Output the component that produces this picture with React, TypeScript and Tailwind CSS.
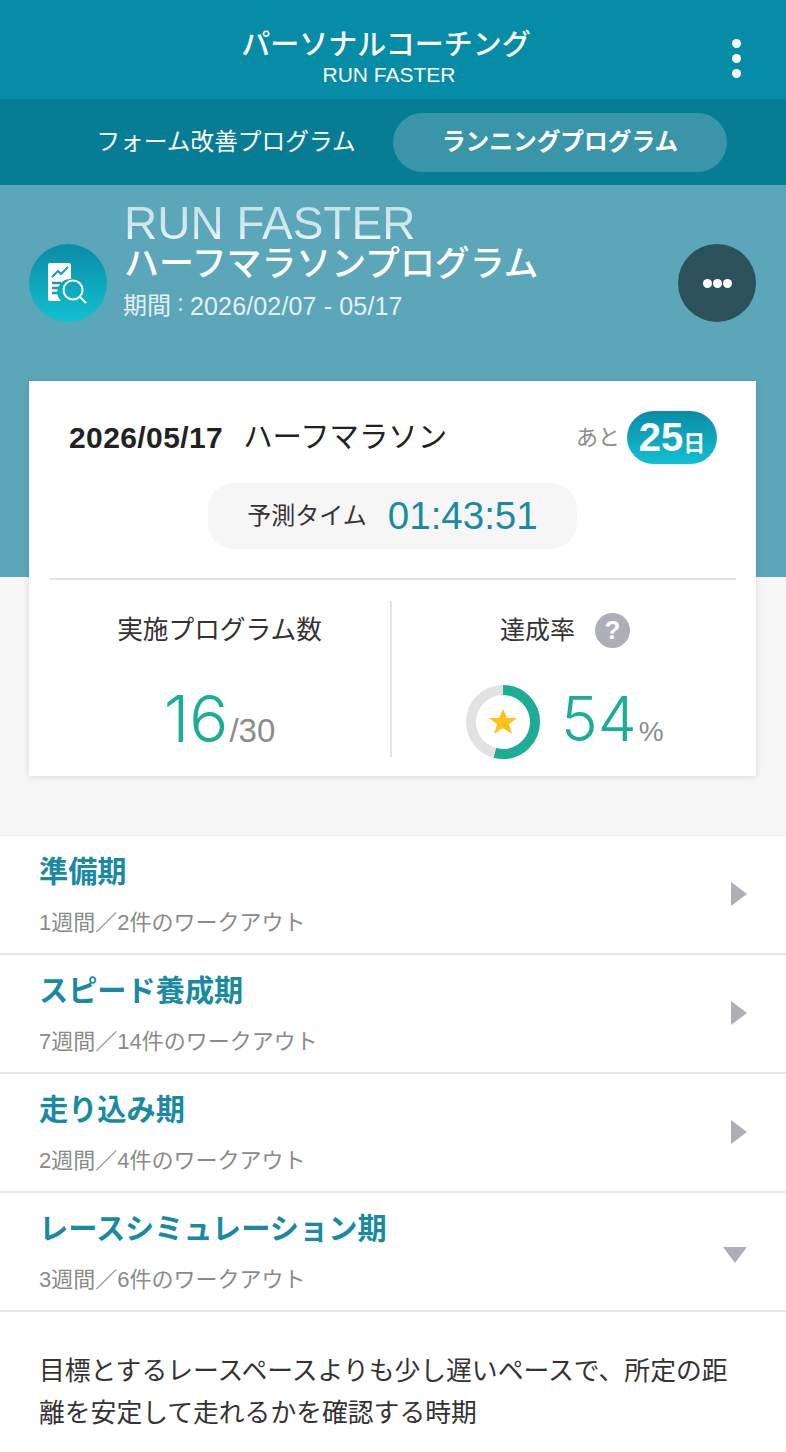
const font = { fontFamily: '"Liberation Sans","Noto Sans CJK JP",sans-serif' };

const rows = [
  { t: "準備期", s: "1週間／2件のワークアウト" },
  { t: "スピード養成期", s: "7週間／14件のワークアウト" },
  { t: "走り込み期", s: "2週間／4件のワークアウト" },
  { t: "レースシミュレーション期", s: "3週間／6件のワークアウト", open: true },
];

function Row({ t, s, open }: { t: string; s: string; open?: boolean }) {
  return (
    <div className="relative h-[119px] border-b-2 border-[#e6e6e6] bg-white pl-[39px] pt-[18px]">
      <div className="text-[29.2px] leading-[36px] font-bold text-[#1a8aa3]">{t}</div>
      <div className="mt-[19px] text-[22px] leading-[28px] text-[#8a8a8a]">{s}</div>
      {open ? (
        <svg className="absolute left-[723px] top-[53px]" width="24" height="18" viewBox="0 0 24 18">
          <path d="M0 1H24L12 17Z" fill="#adaeb6" />
        </svg>
      ) : (
        <svg className="absolute left-[730px] top-[46px]" width="18" height="24" viewBox="0 0 18 24">
          <path d="M1 0L17 12L1 24Z" fill="#adaeb6" />
        </svg>
      )}
    </div>
  );
}

export default function App() {
  return (
    <div style={font} className="h-[1452px] w-[786px] overflow-hidden bg-white">
      <header className="relative h-[99px] bg-[#068ca6] pr-[8px] pt-[27px] text-center text-white">
        <div className="pr-[6px] text-[29px] leading-[36px] font-medium">パーソナルコーチング</div>
        <div className="text-[21px] leading-[24px]">RUN FASTER</div>
        <div className="absolute left-[732px] top-[39px] flex flex-col gap-[6px]">
          <span className="h-[9px] w-[9px] rounded-full bg-white" />
          <span className="h-[9px] w-[9px] rounded-full bg-white" />
          <span className="h-[9px] w-[9px] rounded-full bg-white" />
        </div>
      </header>

      <nav className="flex h-[86px] items-center bg-[#067c95] pl-[59px] text-white">
        <div className="w-[334px] text-center text-[23.7px] leading-[30px]">フォーム改善プログラム</div>
        <div className="flex h-[59px] w-[334px] items-center justify-center rounded-full bg-[#3b95a9] text-[23.7px] leading-[30px] font-bold">
          ランニングプログラム
        </div>
      </nav>

      <section className="h-[392px] bg-[#5ba6b9] pl-[29px] pr-[30px]">
        <div className="flex items-start pt-[15px]">
          <div className="mt-[44px] flex h-[78px] w-[78px] items-center justify-center rounded-full bg-gradient-to-b from-[#0a8ca5] to-[#12c0d2]">
            <svg width="46" height="46" viewBox="0 0 46 46">
              <path d="M3 5a2 2 0 0 1 2-2h19a2 2 0 0 1 2 2v14a13 13 0 0 0-10 22H5a2 2 0 0 1-2-2Z" fill="#fff" />
              <path d="M7 17l6-6 3 3 7-7" fill="none" stroke="#1a9db4" strokeWidth="2" />
              <path d="M7 23h9M7 28h7M7 33h7" stroke="#1a9db4" strokeWidth="2.5" />
              <circle cx="28" cy="30" r="9.5" fill="none" stroke="#fff" strokeWidth="2" />
              <path d="M35 37l6 6" stroke="#fff" strokeWidth="2" />
            </svg>
          </div>
          <div className="ml-[17px] flex-1">
            <div className="bg-gradient-to-b from-[#c5e0e7] via-[#d3e8ed] via-60% to-white bg-clip-text text-[46px] leading-[46px] text-transparent">
              RUN FASTER
            </div>
            <div className="-mt-[2px] text-[34.9px] leading-[40px] font-medium text-white">ハーフマラソンプログラム</div>
            <div className="mt-[7px] flex text-[24px] leading-[30px] text-[#e6f1f4]">
              <span className="-ml-[1px]">期間</span>
              <span className="w-[19px] text-center text-[19px]">：</span>
              <span className="text-[25px] tracking-[0.15px]">2026/02/07 - 05/17</span>
            </div>
          </div>
          <div className="mt-[44px] flex h-[78px] w-[78px] items-center justify-center gap-[1px] rounded-full bg-[#2c5159]">
            <span className="h-[9px] w-[9px] rounded-full bg-white" />
            <span className="h-[9px] w-[9px] rounded-full bg-white" />
            <span className="h-[9px] w-[9px] rounded-full bg-white" />
          </div>
        </div>
      </section>

      <section className="flex h-[258px] flex-col bg-[#f6f6f6] pl-[29px] pr-[30px]">
        <div className="relative -mt-[196px] h-[395px] bg-white px-[20px] shadow-[0_1px_6px_rgba(0,0,0,0.12)]">
          <div className="flex h-[102px] items-center pl-[20px] pr-[19px] pt-[10px]">
            <span className="text-[30px] font-bold tracking-[0.4px] text-[#222]">2026/05/17</span>
            <span className="ml-[20px] text-[29.4px] text-[#222]">ハーフマラソン</span>
            <span className="ml-auto text-[22px] text-[#8c8c8c]">あと</span>
            <span className="ml-[7px] flex h-[53px] w-[90px] items-baseline justify-center rounded-full bg-gradient-to-b from-[#0a8ca5] to-[#12c0d2] pt-[3px] font-bold text-white">
              <span className="text-[40px] leading-[46px]">25</span>
              <span className="text-[22px]">日</span>
            </span>
          </div>
          <div className="mx-auto flex h-[66px] w-[369px] items-center justify-center rounded-[26px] bg-[#f6f6f6]">
            <span className="text-[24px] text-[#333]">予測タイム</span>
            <span className="ml-[21px] text-[38.5px] text-[#1a8aa3]">01:43:51</span>
          </div>
          <div className="mt-[29px] h-[2px] bg-[#e4e4e4]" />
          <div className="mt-[21px] flex">
            <div className="h-[156px] w-[343px] border-r-2 border-[#e4e4e4] text-center">
              <div className="pt-[9px] text-[25.7px] leading-[40px] text-[#333]">実施プログラム数</div>
              <div className="mt-[37px] flex items-baseline justify-center">
                <span className="font-['Inter'] text-[65px] leading-[64px] font-light text-[#1cae94]">16</span>
                <span className="ml-[1px] text-[33px] text-[#8c8c8c]">/30</span>
              </div>
            </div>
            <div className="flex-1 text-center">
              <div className="flex items-center justify-center pt-[9px] pl-[2px]">
                <span className="text-[25px] leading-[40px] text-[#333]">達成率</span>
                <span className="ml-[20px] flex h-[35px] w-[35px] items-center justify-center rounded-full bg-[#adaeb6] text-[26px] font-bold text-white">
                  ?
                </span>
              </div>
              <div className="mt-[35px] flex items-center pl-[74px]">
                <svg width="74" height="74" viewBox="0 0 74 74">
                  <circle cx="37" cy="37" r="32" fill="none" stroke="#e2e2e2" strokeWidth="10" />
                  <circle
                    cx="37"
                    cy="37"
                    r="32"
                    fill="none"
                    stroke="#1cae94"
                    strokeWidth="10"
                    strokeDasharray="108.6 201"
                    transform="rotate(-90 37 37)"
                  />
                  <path d="M37 24l4 9h10l-8 6 3 10-9-6-9 6 3-10-8-6h10Z" fill="#fcc419" />
                </svg>
                <span className="ml-[21px] -mt-[6px] font-['Inter'] text-[62px] leading-[64px] font-light text-[#1cae94]">54</span>
                <span className="ml-[2px] mt-[20px] text-[28px] text-[#8c8c8c]">%</span>
              </div>
            </div>
          </div>
        </div>
      </section>

      <section className="border-t border-[#ececec]">
        {rows.map((r) => (
          <Row key={r.t} {...r} />
        ))}
        <div className="pl-[39px] pr-[40px] pt-[38px] text-[25.8px] leading-[42px] text-[#333]">
          目標とするレースペースよりも少し遅いペースで、所定の距離を安定して走れるかを確認する時期
        </div>
      </section>
    </div>
  );
}
